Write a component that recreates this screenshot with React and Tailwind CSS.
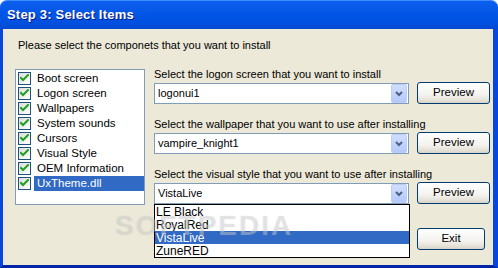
import React from "react";

const font = { fontFamily: '"Liberation Sans", Arial, sans-serif' };

function Check() {
  return (
    <span className="flex h-[13px] w-[13px] shrink-0 items-center justify-center border border-[#1C5180] bg-[linear-gradient(135deg,#DCDCD7,#FFFFFF)]">
      <svg width="9" height="9" viewBox="0 0 9 9">
        <path d="M1 4 L3 6 L8 1" stroke="#21A121" strokeWidth="2" fill="none" strokeLinecap="square" />
      </svg>
    </span>
  );
}

function Combo({ value }) {
  return (
    <div className="flex h-[21px] w-[255px] items-center border border-[#7F9DB9] bg-white pr-[1px]">
      <span className="flex-1 pl-[3px] text-[11px] leading-[13px] text-black">{value}</span>
      <span className="flex h-[19px] w-[16px] items-center justify-center rounded-[2px] border border-[#BACDF7] bg-[linear-gradient(180deg,#D0DEFD,#B5C9FA)]">
        <svg width="8" height="6" viewBox="0 0 8 6">
          <path d="M1 1 L4 4 L7 1" stroke="#4D6185" strokeWidth="2" fill="none" />
        </svg>
      </span>
    </div>
  );
}

function Btn({ children, w = "w-[73px]" }) {
  return (
    <div className={`flex h-[22px] ${w} items-center justify-center rounded-[3px] border border-[#003C74] bg-[linear-gradient(180deg,#FFFFFF_0%,#F3F2EE_60%,#E2DED3_90%,#D6D0C5_100%)] text-[11.5px] text-black`}>
      {children}
    </div>
  );
}

const items = ["Boot screen", "Logon screen", "Wallpapers", "System sounds", "Cursors", "Visual Style", "OEM Information", "UxTheme.dll"];

export default function App() {
  return (
    <div className="flex h-[268px] w-[498px] flex-col overflow-hidden bg-white" style={font}>
      <div className="flex h-[29px] shrink-0 items-center rounded-t-[7px] border-t border-[#3C8CFF] bg-[linear-gradient(180deg,#0A5FF0_0%,#0B5BEA_20%,#0055E5_50%,#0050DF_80%,#0349CE_100%)] pl-[7px]">
        <span className="text-[13px] font-bold tracking-[0.2px] text-white [text-shadow:1px_1px_0_#0A1883]">Step 3: Select Items</span>
      </div>
      <div className="relative flex flex-1 flex-col border-b-[3px] border-l-[3px] border-r-[5px] border-b-[#0025A8] border-l-[#0846E0] border-r-[#0846E0] bg-[#ECE9D8] pl-[12px]">
        <div className="mt-[9px] h-[14px] pl-[3px] text-[11px] leading-[14px] text-black">Please select the componets that you want to install</div>
        <div className="mt-[15px] flex items-start gap-[9px]">
          <div className="mt-[2px] flex h-[136px] w-[130px] flex-col border border-[#7F9DB9] bg-white pl-[2px] pt-[1px]">
            {items.map((it, i) => (
              <div key={it} className="flex h-[15px] items-center">
                <Check />
                <span className={`ml-[3px] flex h-[15px] flex-1 items-center pl-[3px] text-[11.5px] ${i === 7 ? "bg-[#316AC5] text-white" : "text-black"}`}>{it}</span>
              </div>
            ))}
          </div>
          <div className="grid grid-cols-[255px_73px] gap-x-[8px]">
            {[
              ["Select the logon screen that you want to install", "logonui1"],
              ["Select the wallpaper that you want to use after installing", "vampire_knight1"],
              ["Select the visual style that you want to use after installing", "VistaLive"],
            ].map(([label, val], i) => (
              <React.Fragment key={label}>
                <div className={`col-span-2 h-[14px] text-[11px] leading-[14px] text-black ${i > 0 ? "mt-[13px]" : ""}`}>{label}</div>
                <div className="relative mt-[2px]">
                  <Combo value={val} />
                  {i === 2 && (
                    <div className="absolute left-0 top-[21px] z-10 flex w-[256px] flex-col border border-black bg-white">
                      {["LE Black", "RoyalRed", "VistaLive", "ZuneRED"].map((o) => (
                        <div key={o} className={`flex h-[13px] items-center pl-[1px] text-[12px] ${o === "VistaLive" ? "bg-[#316AC5] text-white" : "text-black"}`}>{o}</div>
                      ))}
                    </div>
                  )}
                </div>
                <div className="mt-[1px]"><Btn>Preview</Btn></div>
              </React.Fragment>
            ))}
            <div className="col-start-2 mt-[24px]"><Btn w="w-[68px]">Exit</Btn></div>
          </div>
        </div>
        <div className="pointer-events-none absolute left-[112px] top-[176px] z-20 text-[28px] font-bold tracking-[2px] text-white/30 [text-shadow:0_0_1px_rgba(120,120,120,0.3)]">SOFTPEDIA</div>
      </div>
    </div>
  );
}
